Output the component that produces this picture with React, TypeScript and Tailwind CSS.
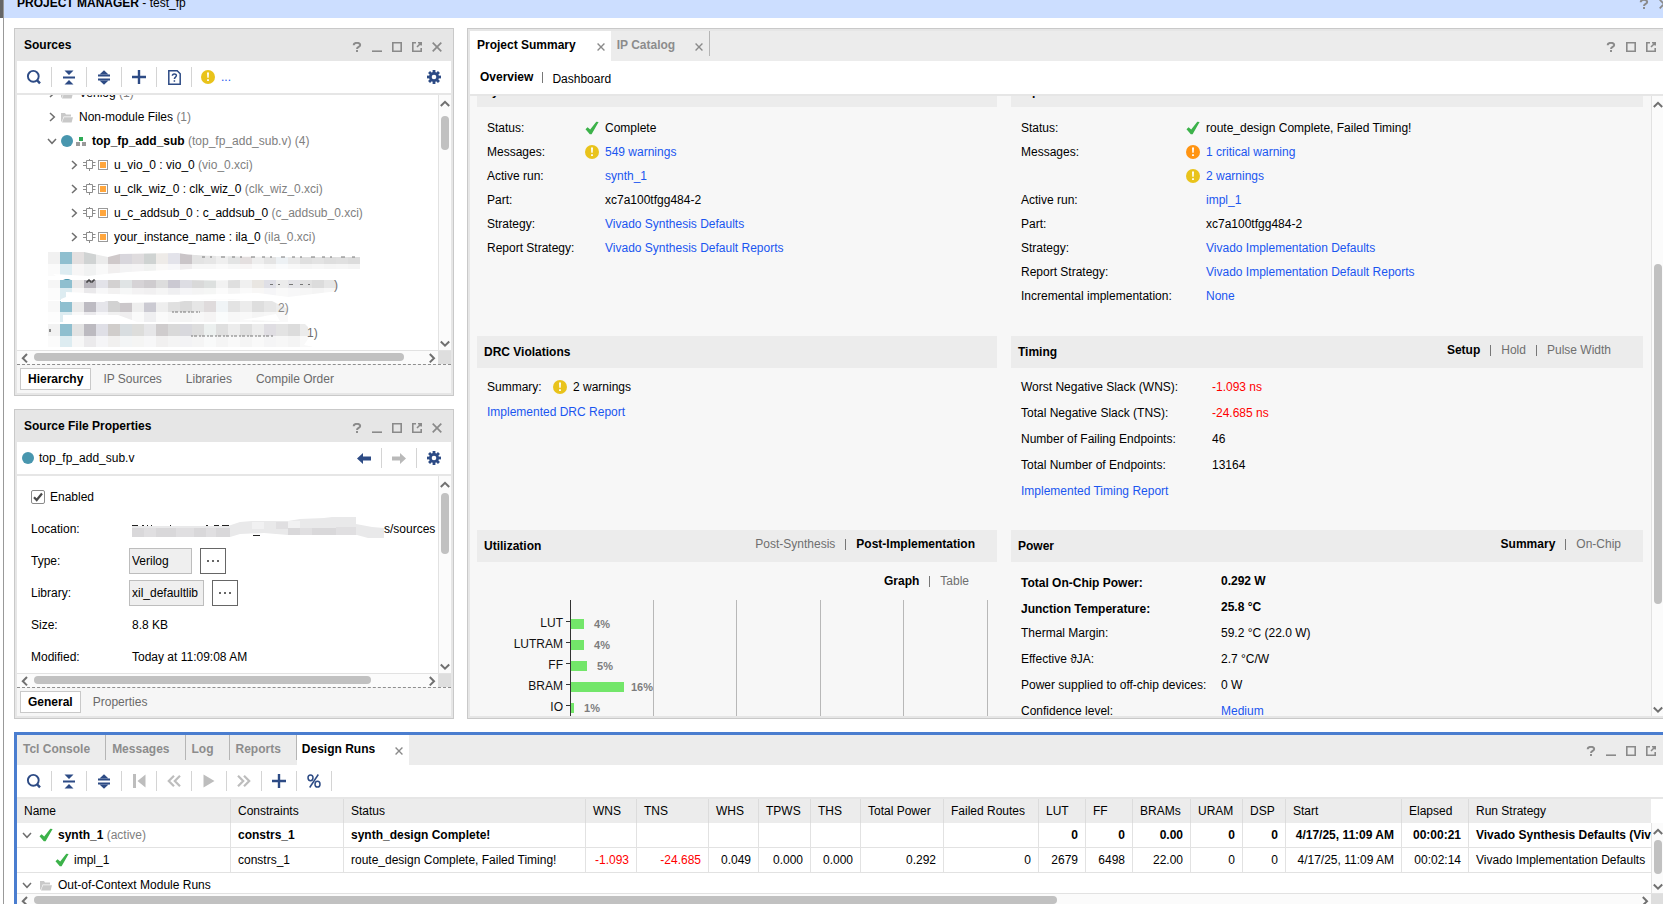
import { useState } from "react";
import type { ReactNode } from "react";

/* ---------- icons ---------- */

function Check() {
  return (
    <svg width="14" height="14" viewBox="0 0 14 14" className="shrink-0">
      <path d="M0.5 8.2 2.6 6.2 5.2 8.6 11.3 0.8 13.6 1 6.6 13.2 4.8 13.2Z" fill="#3cb24a" />
    </svg>
  );
}

function Warn({ color = "#e9c31b" }: { color?: string }) {
  return (
    <svg width="14" height="14" viewBox="0 0 14 14" className="shrink-0">
      <circle cx="7" cy="7" r="7" fill={color} />
      <path d="M6 2.6h2l-0.3 5.2h-1.4zM6.1 9.2h1.8v1.8h-1.8z" fill="#fff" />
    </svg>
  );
}

function Chevron({ open = false }: { open?: boolean }) {
  return (
    <svg width="10" height="10" viewBox="0 0 10 10" className="shrink-0" fill="none" stroke="#6e6e6e" strokeWidth="1.5">
      {open ? <path d="M1 3 5 7.3 9 3" /> : <path d="M3 1 7.3 5 3 9" />}
    </svg>
  );
}

function Folder() {
  return (
    <svg width="12" height="11" viewBox="0 0 12 11" className="shrink-0">
      <path d="M0 1h4l1 1.5h5v2H2.6L1 9.5H0z" fill="#c9c9c9" />
      <path d="M3 5.3h9L10.6 10.5H1z" fill="#c9c9c9" />
    </svg>
  );
}

function Dot() {
  return <span className="size-3 shrink-0 rounded-full bg-[#4896ae]" />;
}

function TopModule() {
  return (
    <svg width="10" height="9" viewBox="0 0 10 9" className="shrink-0">
      <rect x="3" y="0" width="4" height="4" fill="#2eab55" />
      <rect x="0" y="5" width="4" height="4" fill="#9a9a9a" />
      <rect x="6" y="5" width="4" height="4" fill="#9a9a9a" />
    </svg>
  );
}

function IpCore() {
  return (
    <>
      <svg width="13" height="12" viewBox="0 0 13 12" className="shrink-0" fill="none" stroke="#8d8d8d">
        <path d="M3.5 1.5h6v8h-6z" />
        <path d="M0 3.5h3.5M0 6.5h3.5M9.5 3.5h3M9.5 6.5h3M6.5 0v1.5M6.5 9.5V12" />
      </svg>
      <svg width="10" height="10" viewBox="0 0 10 10" className="ml-0.5 shrink-0">
        <rect x="0.5" y="0.5" width="9" height="9" fill="#fff" stroke="#9a9a9a" />
        <rect x="2" y="2" width="6" height="6" fill="#ffa63d" />
      </svg>
    </>
  );
}

function Search() {
  return (
    <svg width="16" height="16" viewBox="0 0 16 16" fill="none" stroke="#2d4b85">
      <circle cx="7.300" cy="7.300" r="5.400" strokeWidth="1.900" />
      <path d="M10.800 11 14 14.300" strokeWidth="2.500" />
    </svg>
  );
}

function Collapse() {
  return (
    <svg width="12" height="15" viewBox="0 0 12 15" fill="#2d4b85">
      <path d="M1.500 0.500h9L6 5zM1.500 14.500h9L6 10z" />
      <rect x="0" y="6.500" width="12" height="2" />
    </svg>
  );
}

function Expand() {
  return (
    <svg width="12" height="15" viewBox="0 0 12 15" fill="#2d4b85">
      <path d="M1.500 4.500h9L6 0.300zM1.500 10.500h9L6 14.700z" />
      <rect x="0" y="4.500" width="12" height="2" />
      <rect x="0" y="8.500" width="12" height="2" />
    </svg>
  );
}

function Plus() {
  return (
    <svg width="14" height="14" viewBox="0 0 14 14" fill="#2d4b85">
      <path d="M5.800 0h2.400v5.800H14v2.400H8.200V14H5.800V8.200H0V5.800h5.800z" />
    </svg>
  );
}

function DocHelp() {
  return (
    <svg width="13" height="15" viewBox="0 0 13 15" fill="none" stroke="#2d4b85" strokeWidth="1.500">
      <path d="M0.800 0.800h8.400l3 3v10.400H0.800z" />
      <path d="M4.400 5.800C4.400 3.400 8.400 3.400 8.400 5.600 8.400 7.200 6.400 7 6.400 9M6.400 10.200v1.500" />
    </svg>
  );
}

function Gear() {
  return (
    <svg width="14" height="14" viewBox="0 0 14 14">
      <g fill="#2d4b85">
        <rect x="5.600" y="0" width="2.800" height="14" />
        <rect x="5.600" y="0" width="2.800" height="14" transform="rotate(45 7 7)" />
        <rect x="5.600" y="0" width="2.800" height="14" transform="rotate(90 7 7)" />
        <rect x="5.600" y="0" width="2.800" height="14" transform="rotate(135 7 7)" />
        <circle cx="7" cy="7" r="5" />
      </g>
      <circle cx="7" cy="7" r="2.300" fill="#fff" />
    </svg>
  );
}

function Arrow({ back = false }: { back?: boolean }) {
  return (
    <svg width="14" height="11" viewBox="0 0 14 11" fill={back ? "#2d4b85" : "#b9b9b9"}>
      {back ? <path d="M0 5.500 6 0v3.500h8v4H6V11z" /> : <path d="M14 5.500 8 0v3.500H0v4h8V11z" />}
    </svg>
  );
}

const grayIcon = "#bdbdbd";

function First() {
  return (
    <svg width="13" height="14" viewBox="0 0 13 14" fill={grayIcon}>
      <path d="M0 0h3v14H0zM12.500 0.500v13L4.500 7z" />
    </svg>
  );
}

function Double({ left = false }: { left?: boolean }) {
  return (
    <svg width="14" height="12" viewBox="0 0 14 12" fill="none" stroke={grayIcon} strokeWidth="2.200">
      {left ? <path d="M7 0.800 1.800 6 7 11.200M13 0.800 7.800 6 13 11.200" /> : <path d="M1 0.800 6.200 6 1 11.200M7 0.800 12.200 6 7 11.200" />}
    </svg>
  );
}

function Play() {
  return (
    <svg width="12" height="14" viewBox="0 0 12 14" fill={grayIcon}>
      <path d="M0.500 0.500v13L11.500 7z" />
    </svg>
  );
}

function Percent() {
  return (
    <svg width="14" height="14" viewBox="0 0 14 14" fill="none" stroke="#2d4b85" strokeWidth="1.500">
      <ellipse cx="3.500" cy="3.800" rx="2.500" ry="2.900" />
      <ellipse cx="10.500" cy="10.200" rx="2.500" ry="2.900" />
      <path d="M11.300 0.500 2.700 13.500" />
    </svg>
  );
}

function Cross({ size = 8 }: { size?: number }) {
  return (
    <svg width={size} height={size} viewBox="0 0 10 10" fill="none" stroke="#8a8a8a" strokeWidth="1.700">
      <path d="M0.700 0.700 9.300 9.300M9.300 0.700 0.700 9.300" />
    </svg>
  );
}

/* ---------- window buttons ---------- */

type WinIcon = "help" | "min" | "max" | "float" | "close";

function WindowButtons({ items }: { items: WinIcon[] }) {
  return (
    <div className="flex items-center pt-0.5">
      {items.map((i) => (
        <button key={i} aria-label={i} className="flex h-5 w-5 items-center justify-center">
          {i === "close" ? (
            <Cross size={10} />
          ) : (
            <svg width="10" height="10" viewBox="0 0 10 10" fill="none" stroke="#8a8a8a" strokeWidth="1.600">
              {i === "help" && <path d="M1.700 3.200C1.700 0.100 8.200 0 8.200 3 8.200 5 5 4.700 5 7M5 8v2" strokeWidth="1.900" />}
              {i === "min" && <path d="M0 9.200h10" />}
              {i === "max" && <path d="M0.800 0.800h8.400v8.400H0.800z" />}
              {i === "float" && <path d="M4 0.800H0.800v8.400h8.400V6M6 0.800h3.200V3.500M9 1 5 5" />}
            </svg>
          )}
        </button>
      ))}
    </div>
  );
}

/* ---------- scroll bars ---------- */

interface ScrollProps {
  before: number;
  thumb: number;
  after: number;
}

function VScroll({ before, thumb, after }: ScrollProps) {
  return (
    <div className="flex w-[13px] shrink-0 flex-col items-center border-l border-[#e2e2e2] bg-[#fbfbfb]">
      <svg width="10" height="17" viewBox="0 0 10 17" fill="none" stroke="#707070" strokeWidth="2" className="shrink-0">
        <path d="M0.800 11 5 6.800 9.200 11" />
      </svg>
      <div className="flex min-h-0 flex-1 flex-col">
        <span style={{ flex: before }} />
        <span className="w-2 rounded-full bg-[#c1c1c1]" style={{ flex: thumb }} />
        <span style={{ flex: after }} />
      </div>
      <svg width="10" height="17" viewBox="0 0 10 17" fill="none" stroke="#707070" strokeWidth="2" className="shrink-0">
        <path d="M0.800 8.500 5 12.700 9.200 8.500" />
      </svg>
    </div>
  );
}

function HScroll({ before, thumb, after }: ScrollProps) {
  return (
    <div className="flex h-[14px] shrink-0 border-t border-[#e2e2e2] bg-[#fbfbfb]">
      <svg width="17" height="13" viewBox="0 0 17 13" fill="none" stroke="#707070" strokeWidth="2" className="shrink-0">
        <path d="M10 3 5.800 7.200 10 11.400" />
      </svg>
      <div className="flex min-w-0 flex-1 pt-0.5">
        <span style={{ flex: before }} />
        <span className="h-2 rounded-full bg-[#c1c1c1]" style={{ flex: thumb }} />
        <span style={{ flex: after }} />
      </div>
      <svg width="17" height="13" viewBox="0 0 17 13" fill="none" stroke="#707070" strokeWidth="2" className="shrink-0">
        <path d="M8.800 3 13 7.200 8.800 11.400" />
      </svg>
      <span className="w-[13px] bg-[#dedede]" />
    </div>
  );
}

/* ---------- shared pieces ---------- */

function Tool({ label, children }: { label: string; children: ReactNode }) {
  return (
    <button aria-label={label} className="flex h-5 w-[35px] items-center justify-center border-r border-[#d4d4d4]">
      {children}
    </button>
  );
}

function Panel({ title, children }: { title: string; children: ReactNode }) {
  return (
    <div className="flex h-full flex-col border border-[#c9c9c9] bg-white">
      <div className="flex min-h-0 flex-1 flex-col border-2 border-[#e6e6e6]">
        <div className="flex h-[30px] shrink-0 items-center justify-between bg-[#e6e6e6] pr-1 pl-[7px]">
          <h2 className="pb-0.5 font-bold">{title}</h2>
          <WindowButtons items={["help", "min", "max", "float", "close"]} />
        </div>
        {children}
      </div>
    </div>
  );
}

function BottomTabs({ tabs }: { tabs: string[] }) {
  const [active, setActive] = useState(tabs[0]);
  return (
    <div className="flex h-[29px] shrink-0 items-center border-t border-dashed border-[#8f8f8f] bg-[#f6f6f6] pl-[3px]">
      {tabs.map((t) => (
        <button
          key={t}
          onClick={() => setActive(t)}
          className={t === active ? "h-[22px] border border-[#c9c9c9] bg-white px-[7px] font-bold" : "h-[22px] px-3 text-[#6a6a6a]"}
        >
          {t}
        </button>
      ))}
    </div>
  );
}

/* ---------- sources ---------- */

const ipCores = [
  { name: "u_vio_0 : vio_0", file: "(vio_0.xci)" },
  { name: "u_clk_wiz_0 : clk_wiz_0", file: "(clk_wiz_0.xci)" },
  { name: "u_c_addsub_0 : c_addsub_0", file: "(c_addsub_0.xci)" },
  { name: "your_instance_name : ila_0", file: "(ila_0.xci)" },
];

const blurRows = [
  {
    y: 3,
    h: 12,
    fade: 12,
    cells: ["#f1f1f1", "#8fbfcf", "#e4e0e0", "#d0d3d3", "#ebebeb", "#cfc9ca", "#d8d6dc", "#dfdcde", "#cfd3d2", "#eeebe8", "#e3e3ea", "#cac5c8", "#e3e3e3", "#e6e6e6", "#efefef", "#e3e4e4", "#e4dfdf", "#eeeeee", "#e4e4e4", "#edf1f4", "#e9e9e9", "#dfdfdf", "#e3e3e3", "#dedede", "#e0e0e0", "#dcdcdc"],
  },
  {
    y: 31,
    h: 8,
    fade: 12,
    cells: ["#f6f6f6", "#8fbfcf", "#ebe9e9", "#b9b6bd", "#e3e3e9", "#d3d1d1", "#e0e4e5", "#d6d3d6", "#cfcccf", "#dddddd", "#cbc9d2", "#dddde3", "#d9d9d9", "#dde0df", "#f2f2f2", "#dfdfdf", "#f0f0f0", "#e9e6e2", "#dfdfe6", "#ececec", "#e4e4e8", "#e2e2e2", "#dcdcdc", "#e6e6e6"],
  },
  {
    y: 52,
    h: 11,
    fade: 10,
    cells: ["#f8f8f8", "#8fbfcf", "#ebebeb", "#bdbbc2", "#e5e5ea", "#d2d2d2", "#cbc7ca", "#eeeeee", "#cbcad2", "#eeeeee", "#e0e0e0", "#dadada", "#e6e6e6", "#dfdbdc", "#f0f4f6", "#e3e3e3", "#ececec", "#dedede", "#e6e6e6", "#ececec"],
  },
  {
    y: 75,
    h: 12,
    fade: 11,
    cells: ["#f2f2f2", "#8fbfcf", "#e3e3e3", "#bcbac0", "#dfdfe6", "#d0cdcb", "#d8dde0", "#dddddb", "#e6e6e8", "#cfcccd", "#d9d9d9", "#d8d8dd", "#dddddd", "#ecf0ef", "#dfdfdf", "#ececec", "#dfdfdf", "#ececec", "#dfdde2", "#e3e3e3", "#dcdcdc", "#ebebeb"],
  },
];

function Smudges() {
  return (
    <svg width="320" height="100" viewBox="0 0 320 100" className="ml-[31px] shrink-0">
      {blurRows.map((r) =>
        r.cells.map((c, i) => (
          <g key={`${r.y}-${i}`}>
            <rect x={i * 12} y={r.y} width="12" height={r.h} fill={c} />
            <rect x={i * 12} y={r.y + r.h} width="12" height={r.fade} fill={c} opacity="0.3" />
          </g>
        ))
      )}
      <path d="M36 3 60 8 72 5 130 4C150 8 200 8 312 8V0H36Z" fill="#fff" />
      <path d="M145 20H312V27H250L190 31C140 33 100 28 60 27L55 31H14L5 25 40 27C90 21 110 22 145 20Z" fill="#fff" />
      <path d="M18 43C70 46 140 47 210 44L240 48 290 42V52H220C190 50 150 50 130 53L72 54 68 51 60 51 56 53H13V50L18 48Z" fill="#fff" />
      <path d="M15 66H70L92 74H15ZM194 71 228 65 232 72ZM222 51 240 60V50ZM256 74 260 78 262 87 256 96 266 98V74Z" fill="#fff" />
      <g fill="none" stroke="#777" strokeWidth="1" strokeDasharray="3 5 2 9 4 7">
        <path d="M154 8H312M222 35.500H268" />
        <path d="M124 63H152M143 87H226" strokeDasharray="2 1 3 2" />
      </g>
      <path d="M38 33h2v-2h2v2h3v-2h2M2 80v3" fill="none" stroke="#222" />
      <path d="M15 31C17 29.500 21 29.500 23 31Z" fill="#4896ae" />
      <text x="286" y="40" fontSize="12" fill="#6e6e6e">)</text>
      <text x="230" y="63" fontSize="12" fill="#8a8a8a">2)</text>
      <text x="259" y="88" fontSize="12" fill="#6e6e6e">1)</text>
    </svg>
  );
}

function Sources() {
  return (
    <Panel title="Sources">
      <div className="flex h-8 shrink-0 items-center">
        <Tool label="Search"><Search /></Tool>
        <Tool label="Collapse All"><Collapse /></Tool>
        <Tool label="Expand All"><Expand /></Tool>
        <Tool label="Add Sources"><Plus /></Tool>
        <Tool label="Report"><DocHelp /></Tool>
        <span className="pl-[9px]"><Warn /></span>
        <a href="#messages" className="pl-[6px] text-[#1a56f0]">...</a>
        <button aria-label="Settings" className="mr-[10px] ml-auto"><Gear /></button>
      </div>
      <div className="flex min-h-0 flex-1 border-t-2 border-[#e6e6e6]">
        <div className="min-w-0 flex-1 overflow-hidden">
          <div className="-mt-3.5 flex flex-col whitespace-nowrap">
            <div className="flex h-6 shrink-0 items-center pl-[30px]">
              <Chevron /><span className="w-1" /><Folder />
              <span className="pl-1.5">Verilog <span className="text-[#808080]">(1)</span></span>
            </div>
            <div className="flex h-6 shrink-0 items-center pl-[30px]">
              <Chevron /><span className="w-1" /><Folder />
              <span className="pl-1.5">Non-module Files <span className="text-[#808080]">(1)</span></span>
            </div>
            <div className="flex h-6 shrink-0 items-center pl-[30px]">
              <Chevron open /><span className="w-1" /><Dot /><span className="w-[3px]" /><TopModule />
              <span className="pl-1.5">
                <b>top_fp_add_sub</b> <span className="text-[#808080]">(top_fp_add_sub.v) (4)</span>
              </span>
            </div>
            {ipCores.map((c) => (
              <div key={c.name} className="flex h-6 shrink-0 items-center pl-[52px]">
                <Chevron /><span className="w-1" /><IpCore />
                <span className="pl-1.5">{c.name} <span className="text-[#808080]">{c.file}</span></span>
              </div>
            ))}
            <Smudges />
          </div>
        </div>
        <VScroll before={4} thumb={34} after={183} />
      </div>
      <HScroll before={0} thumb={369} after={17} />
      <BottomTabs tabs={["Hierarchy", "IP Sources", "Libraries", "Compile Order"]} />
    </Panel>
  );
}

/* ---------- source file properties ---------- */

function MoreButton({ label }: { label: string }) {
  return (
    <button aria-label={label} className="ml-2 flex size-[26px] items-center justify-center gap-[3px] border border-[#666]">
      <span className="size-0.5 bg-[#666]" />
      <span className="size-0.5 bg-[#666]" />
      <span className="size-0.5 bg-[#666]" />
    </button>
  );
}

function Properties() {
  const [enabled, setEnabled] = useState(true);
  return (
    <Panel title="Source File Properties">
      <div className="flex h-8 shrink-0 items-center pl-[5px]">
        <Dot />
        <span className="pl-[5px]">top_fp_add_sub.v</span>
        <button aria-label="Back" className="ml-auto flex h-5 w-[35px] items-center justify-center border-r border-[#d4d4d4]"><Arrow back /></button>
        <button aria-label="Forward" className="flex h-5 w-[35px] items-center justify-center border-r border-[#d4d4d4]"><Arrow /></button>
        <button aria-label="Settings" className="mr-[10px] ml-[10px]"><Gear /></button>
      </div>
      <div className="flex min-h-0 flex-1 border-t-2 border-[#e6e6e6]">
        <div className="min-w-0 flex-1 overflow-hidden pt-[5px] pl-[14px] whitespace-nowrap">
          <label className="flex h-8 items-center gap-[5px]">
            <span className="relative flex size-[14px]">
              <input
                type="checkbox"
                checked={enabled}
                onChange={(e) => setEnabled(e.target.checked)}
                className="size-[14px] appearance-none rounded-[2px] border border-[#8a8a8a] bg-white"
              />
              {enabled && (
                <svg width="14" height="14" viewBox="0 0 14 14" fill="none" stroke="#4a4a4a" strokeWidth="2.200" className="pointer-events-none absolute inset-0">
                  <path d="M3 7.200 5.700 10 11 3.500" />
                </svg>
              )}
            </span>
            Enabled
          </label>
          <div className="flex h-8 items-center">
            <span className="w-[101px] shrink-0">Location:</span>
            <svg width="252" height="24" viewBox="0 0 252 24" className="shrink-0">
              <path d="M0 9H96L108 5 120 4H156L168 2 192 1 200 0H224V7L240 10 252 11V21H236L225 18H156L132 16 108 17 98 20H0Z" fill="#e9e9ea" />
              <path d="M0 11h12v9H0zM24 11h20v9H24zM62 11h12v9H62zM84 11h14v9H84zM156 11h12v7h-12zM180 11h24v7h-24z" fill="#d9d8da" />
              <path d="M12 11h12v9H12zM44 11h18v9H44zM74 11h10v9H74zM144 5h12v7h-12zM168 11h12v7h-12zM204 10h20v8h-20z" fill="#e0dfe1" />
              <path d="M120 5h12v7h-12zM156 4h12v7h-12z" fill="#f1f1f2" />
              <path d="M0 8.500h6M10 8.500h2M15 8.500h1M19 8.500h1M38 8.500h1M74 8.500h2M82 8.500h5M90 8.500h7M121 18.500h7" stroke="#222" />
            </svg>
            <span>s/sources</span>
          </div>
          <div className="flex h-8 items-center">
            <label htmlFor="type" className="w-[98px] shrink-0">Type:</label>
            <input id="type" readOnly value="Verilog" className="h-[26px] w-[63px] border border-[#bdbdbd] bg-[#efefef] px-0.5" />
            <MoreButton label="Change type" />
          </div>
          <div className="flex h-8 items-center">
            <label htmlFor="library" className="w-[98px] shrink-0">Library:</label>
            <input id="library" readOnly value="xil_defaultlib" className="h-[26px] w-[75px] border border-[#bdbdbd] bg-[#efefef] px-0.5" />
            <MoreButton label="Change library" />
          </div>
          <div className="flex h-8 items-center">
            <span className="w-[101px] shrink-0">Size:</span>8.8 KB
          </div>
          <div className="flex h-8 items-center">
            <span className="w-[101px] shrink-0">Modified:</span>Today at 11:09:08 AM
          </div>
        </div>
        <VScroll before={0} thumb={61} after={102} />
      </div>
      <HScroll before={0} thumb={336} after={50} />
      <BottomTabs tabs={["General", "Properties"]} />
    </Panel>
  );
}

/* ---------- project summary ---------- */

function Link({ children }: { children: ReactNode }) {
  return <a href="#report" className="text-[#1a56f0]">{children}</a>;
}

function Switcher({ items, active }: { items: string[]; active: string }) {
  return (
    <div className="flex items-center pb-1">
      {items.map((t, i) => (
        <div key={t} className="flex items-center">
          {i > 0 && <span className="mx-[10px] h-[11px] w-px bg-[#777]" />}
          <button className={t === active ? "font-bold" : "text-[#6f6f6f]"}>{t}</button>
        </div>
      ))}
    </div>
  );
}

function Section({ title, extra, children }: { title: string; extra?: ReactNode; children: ReactNode }) {
  return (
    <section className="min-w-0">
      <div className="flex h-8 items-center justify-between bg-[#ececec] pl-[7px]">
        <h3 className="pb-px font-bold">{title}</h3>
        {extra}
      </div>
      {children}
    </section>
  );
}

function RunRow({ label, icon, wide, children }: { label: string; icon?: ReactNode; wide?: boolean; children: ReactNode }) {
  return (
    <div className="flex h-6 items-center pl-[10px]">
      <span className={wide ? "w-[165px]" : "w-[98px]"}>{label}</span>
      <span className="flex w-5">{icon}</span>
      {children}
    </div>
  );
}

const timing = [
  { label: "Worst Negative Slack (WNS):", value: "-1.093 ns", bad: true },
  { label: "Total Negative Slack (TNS):", value: "-24.685 ns", bad: true },
  { label: "Number of Failing Endpoints:", value: "46" },
  { label: "Total Number of Endpoints:", value: "13164" },
];

const power = [
  { label: "Total On-Chip Power:", value: "0.292 W", bold: true },
  { label: "Junction Temperature:", value: "25.8 °C", bold: true },
  { label: "Thermal Margin:", value: "59.2 °C (22.0 W)" },
  { label: "Effective ϑJA:", value: "2.7 °C/W" },
  { label: "Power supplied to off-chip devices:", value: "0 W" },
];

const utilization = [
  { name: "LUT", pct: 4, bar: 13 },
  { name: "LUTRAM", pct: 4, bar: 13 },
  { name: "FF", pct: 5, bar: 16 },
  { name: "BRAM", pct: 16, bar: 53 },
  { name: "IO", pct: 1, bar: 3 },
];

function UtilizationChart() {
  return (
    <svg width="520" height="140" viewBox="0 0 520 140">
      {[176, 259, 343, 426, 510].map((x) => (
        <rect key={x} x={x} y="0" width="1" height="140" fill="#b8b8b8" />
      ))}
      {utilization.map((u, i) => {
        const y = 23 + i * 21;
        return (
          <g key={u.name}>
            <text x="86" y={y + 4} textAnchor="end" fontSize="12" fill="#111">{u.name}</text>
            <rect x="89" y={y - 2} width="5" height="1" fill="#333" />
            <rect x="94" y={y - 4} width={u.bar} height="10" fill="#73e66a" />
            <text x={u.pct === 16 ? 154 : 104 + u.bar} y={y + 5} fontSize="11" fontWeight="bold" fill="#7d7d7d">{u.pct}%</text>
          </g>
        );
      })}
      <rect x="93" y="0" width="1" height="140" fill="#333" />
    </svg>
  );
}

function ProjectSummary() {
  return (
    <div className="flex h-full flex-col border border-[#c9c9c9] bg-white">
      <div className="flex min-h-0 flex-1 flex-col border-2 border-[#e6e6e6]">
        <div className="flex h-[30px] shrink-0 bg-[#ececec]">
          <button className="flex items-center bg-white pr-[6px] pl-[7px] font-bold">
            <span className="pb-0.5">Project Summary</span>
            <span className="pt-0.5 pl-[21px]"><Cross /></span>
          </button>
          <button className="flex h-[25px] items-center border-r border-[#b5b5b5] pr-[6px] pl-[6px] font-bold text-[#8c8c8c]">
            <span className="pt-0.5">IP Catalog</span>
            <span className="pt-1.5 pl-5"><Cross /></span>
          </button>
          <div className="ml-auto flex pr-[3px]">
            <WindowButtons items={["help", "max", "float"]} />
          </div>
        </div>
        <div className="flex h-[33px] shrink-0 items-center pl-[10px]">
          <button className="pb-0.5 font-bold">Overview</button>
          <span className="mx-[9px] h-[11px] w-px bg-[#777]" />
          <button className="pt-0.5">Dashboard</button>
        </div>
        <div className="flex min-h-0 flex-1 border-t-2 border-[#e6e6e6] bg-[#f7f7f7]">
          <div className="min-w-0 flex-1 overflow-hidden pr-2 pl-[7px] whitespace-nowrap">
            <div className="-mt-[21px] grid grid-cols-[520fr_632fr] grid-rows-[261px_194px_auto] gap-x-[14px]">
              <Section title="Synthesis">
                <div className="pt-[9px]">
                  <RunRow label="Status:" icon={<Check />}>Complete</RunRow>
                  <RunRow label="Messages:" icon={<Warn />}><Link>549 warnings</Link></RunRow>
                  <RunRow label="Active run:"><Link>synth_1</Link></RunRow>
                  <RunRow label="Part:">xc7a100tfgg484-2</RunRow>
                  <RunRow label="Strategy:"><Link>Vivado Synthesis Defaults</Link></RunRow>
                  <RunRow label="Report Strategy:"><Link>Vivado Synthesis Default Reports</Link></RunRow>
                </div>
              </Section>
              <Section
                title="Implementation"
                extra={<div className="pr-8"><Switcher items={["Summary", "Route Status"]} active="Summary" /></div>}
              >
                <div className="pt-[9px]">
                  <RunRow wide label="Status:" icon={<Check />}>route_design Complete, Failed Timing!</RunRow>
                  <RunRow wide label="Messages:" icon={<Warn color="#ff9412" />}><Link>1 critical warning</Link></RunRow>
                  <RunRow wide label="" icon={<Warn />}><Link>2 warnings</Link></RunRow>
                  <RunRow wide label="Active run:"><Link>impl_1</Link></RunRow>
                  <RunRow wide label="Part:">xc7a100tfgg484-2</RunRow>
                  <RunRow wide label="Strategy:"><Link>Vivado Implementation Defaults</Link></RunRow>
                  <RunRow wide label="Report Strategy:"><Link>Vivado Implementation Default Reports</Link></RunRow>
                  <RunRow wide label="Incremental implementation:"><Link>None</Link></RunRow>
                </div>
              </Section>
              <Section title="DRC Violations">
                <div className="pt-1.5 pl-[10px]">
                  <div className="flex h-[26px] items-center">
                    <span className="w-[66px]">Summary:</span>
                    <Warn />
                    <span className="pl-1.5">2 warnings</span>
                  </div>
                  <div className="flex h-6 items-center"><Link>Implemented DRC Report</Link></div>
                </div>
              </Section>
              <Section
                title="Timing"
                extra={<div className="pr-8"><Switcher items={["Setup", "Hold", "Pulse Width"]} active="Setup" /></div>}
              >
                <div className="pt-1.5 pl-[10px]">
                  {timing.map((t) => (
                    <div key={t.label} className="flex h-[26px] items-center">
                      <span className="w-[191px]">{t.label}</span>
                      <span className={t.bad ? "text-[#ff0000]" : ""}>{t.value}</span>
                    </div>
                  ))}
                  <div className="flex h-[26px] items-center"><Link>Implemented Timing Report</Link></div>
                </div>
              </Section>
              <Section
                title="Utilization"
                extra={<div className="pr-[22px]"><Switcher items={["Post-Synthesis", "Post-Implementation"]} active="Post-Implementation" /></div>}
              >
                <div className="flex h-[38px] items-center justify-end pt-1 pr-7">
                  <Switcher items={["Graph", "Table"]} active="Graph" />
                </div>
                <UtilizationChart />
              </Section>
              <Section
                title="Power"
                extra={<div className="pr-[22px]"><Switcher items={["Summary", "On-Chip"]} active="Summary" /></div>}
              >
                <div className="pt-1.5 pl-[10px]">
                  {power.map((p) => (
                    <div key={p.label} className={p.bold ? "flex h-[26px] items-center font-bold" : "flex h-[26px] items-center"}>
                      <span className={p.bold ? "w-[200px] pt-[3px]" : "w-[200px]"}>{p.label}</span>
                      <span>{p.value}</span>
                    </div>
                  ))}
                  <div className="flex h-[26px] items-center">
                    <span className="w-[200px]">Confidence level:</span>
                    <Link>Medium</Link>
                  </div>
                </div>
              </Section>
            </div>
          </div>
          <VScroll before={151} thumb={340} after={95} />
        </div>
      </div>
    </div>
  );
}

/* ---------- design runs ---------- */

const heads = ["Name", "Constraints", "Status", "WNS", "TNS", "WHS", "TPWS", "THS", "Total Power", "Failed Routes", "LUT", "FF", "BRAMs", "URAM", "DSP", "Start", "Elapsed", "Run Strategy"];
const widths = [214, 113, 242, 51, 72, 50, 52, 50, 83, 95, 47, 47, 58, 52, 43, 116, 67];

const synthRow = ["constrs_1", "synth_design Complete!", "", "", "", "", "", "", "", "0", "0", "0.00", "0", "0", "4/17/25, 11:09 AM", "00:00:21", "Vivado Synthesis Defaults (Vivado Synthesis 2018)"];
const implRow = ["constrs_1", "route_design Complete, Failed Timing!", "-1.093", "-24.685", "0.049", "0.000", "0.000", "0.292", "0", "2679", "6498", "22.00", "0", "0", "4/17/25, 11:09 AM", "00:02:14", "Vivado Implementation Defaults"];

function RunCells({ cells }: { cells: string[] }) {
  return (
    <>
      {cells.map((c, i) => {
        const numeric = i > 1 && i < cells.length - 1;
        const last = i === cells.length - 1;
        return (
          <td
            key={i}
            className={`overflow-hidden border-b border-[#e2e2e2] pl-[7px] ${last ? "" : "border-r pr-[7px]"} ${numeric ? "text-right" : ""} ${c.startsWith("-") ? "text-[#ff0000]" : ""}`}
          >
            {c}
          </td>
        );
      })}
    </>
  );
}

function DesignRuns() {
  return (
    <div className="flex h-[172px] shrink-0 flex-col overflow-hidden border-t-[3px] border-l-[3px] border-[#4a7dcf] bg-white">
      <div className="flex h-[30px] shrink-0 bg-[#ececec]">
        {["Tcl Console", "Messages", "Log", "Reports"].map((t) => (
          <button key={t} className="h-[25px] border-r border-[#b5b5b5] pt-0.5 pr-[15px] pl-1.5 font-bold text-[#8c8c8c]">{t}</button>
        ))}
        <button className="flex items-center bg-white pr-[6px] pl-[5px] font-bold">
          <span className="pb-0.5">Design Runs</span>
          <span className="pt-0.5 pl-5"><Cross /></span>
        </button>
        <div className="ml-auto flex pr-[6px]">
          <WindowButtons items={["help", "min", "max", "float"]} />
        </div>
      </div>
      <div className="flex h-8 shrink-0 items-center">
        <Tool label="Search"><Search /></Tool>
        <Tool label="Collapse All"><Collapse /></Tool>
        <Tool label="Expand All"><Expand /></Tool>
        <Tool label="Reset Runs"><First /></Tool>
        <Tool label="Step Back"><Double left /></Tool>
        <Tool label="Launch Runs"><Play /></Tool>
        <Tool label="Step Forward"><Double /></Tool>
        <Tool label="Create Runs"><Plus /></Tool>
        <Tool label="Show Percentage"><Percent /></Tool>
      </div>
      <div className="flex min-h-0 flex-1 border-t-2 border-[#e6e6e6] pr-[3px]">
        <div className="min-w-0 flex-1 overflow-hidden">
          <table className="w-full table-fixed border-separate border-spacing-0 whitespace-nowrap">
            <colgroup>
              {widths.map((w, i) => (
                <col key={i} style={{ width: w }} />
              ))}
              <col />
            </colgroup>
            <thead>
              <tr className="h-6 bg-[#ececec] text-left">
                {heads.map((h) => (
                  <th key={h} className="border-r border-[#dcdcdc] px-[7px] font-normal last:border-r-0">{h}</th>
                ))}
              </tr>
            </thead>
            <tbody>
              <tr className="h-[25px] font-bold">
                <td className="border-r border-b border-[#e2e2e2] pl-[5px]">
                  <div className="flex items-center">
                    <Chevron open />
                    <span className="w-[7px]" />
                    <span className="flex w-[14px]"><Check /></span>
                    <span className="pl-[5px]">synth_1 <span className="font-normal text-[#808080]">(active)</span></span>
                  </div>
                </td>
                <RunCells cells={synthRow} />
              </tr>
              <tr className="h-[25px]">
                <td className="border-r border-b border-[#e2e2e2] pl-[38px]">
                  <div className="flex items-center">
                    <span className="flex w-[14px]"><Check /></span>
                    <span className="pl-[5px]">impl_1</span>
                  </div>
                </td>
                <RunCells cells={implRow} />
              </tr>
              <tr className="h-6">
                <td colSpan={18} className="pl-[5px]">
                  <div className="flex items-center">
                    <Chevron open />
                    <span className="w-2" />
                    <Folder />
                    <span className="pl-1.5">Out-of-Context Module Runs</span>
                  </div>
                </td>
              </tr>
            </tbody>
          </table>
        </div>
        <div className="flex pt-6">
          <VScroll before={0} thumb={34} after={2} />
        </div>
      </div>
      <div className="-mb-[3px] pr-[3px]">
        <HScroll before={0} thumb={1023} after={577} />
      </div>
    </div>
  );
}

export default function App() {
  return (
    <div className="flex h-screen w-full overflow-hidden bg-white font-['Liberation_Sans',Arial,sans-serif] text-[12px] leading-4 text-black">
      <div className="w-1 shrink-0 border-r border-[#999]">
        <div className="h-[18px] bg-[#666]" />
      </div>
      <div className="flex min-w-0 flex-1 flex-col">
        <header className="flex h-[18px] shrink-0 justify-between overflow-hidden bg-[#ccdeff] pl-[13px]">
          <h1 className="-mt-[5px]"><b>PROJECT MANAGER</b> - test_fp</h1>
          <div className="-mt-2 -mr-[11px]"><WindowButtons items={["help", "close"]} /></div>
        </header>
        <main className="-mr-1 flex min-h-0 flex-1 flex-col gap-[13px] pt-[10px] pl-[10px]">
          <div className="flex min-h-0 flex-1 gap-[13px]">
            <div className="flex w-[440px] shrink-0 flex-col gap-[13px]">
              <div className="min-h-0 flex-1"><Sources /></div>
              <div className="h-[310px] shrink-0"><Properties /></div>
            </div>
            <div className="min-w-0 flex-1"><ProjectSummary /></div>
          </div>
          <DesignRuns />
        </main>
      </div>
    </div>
  );
}
